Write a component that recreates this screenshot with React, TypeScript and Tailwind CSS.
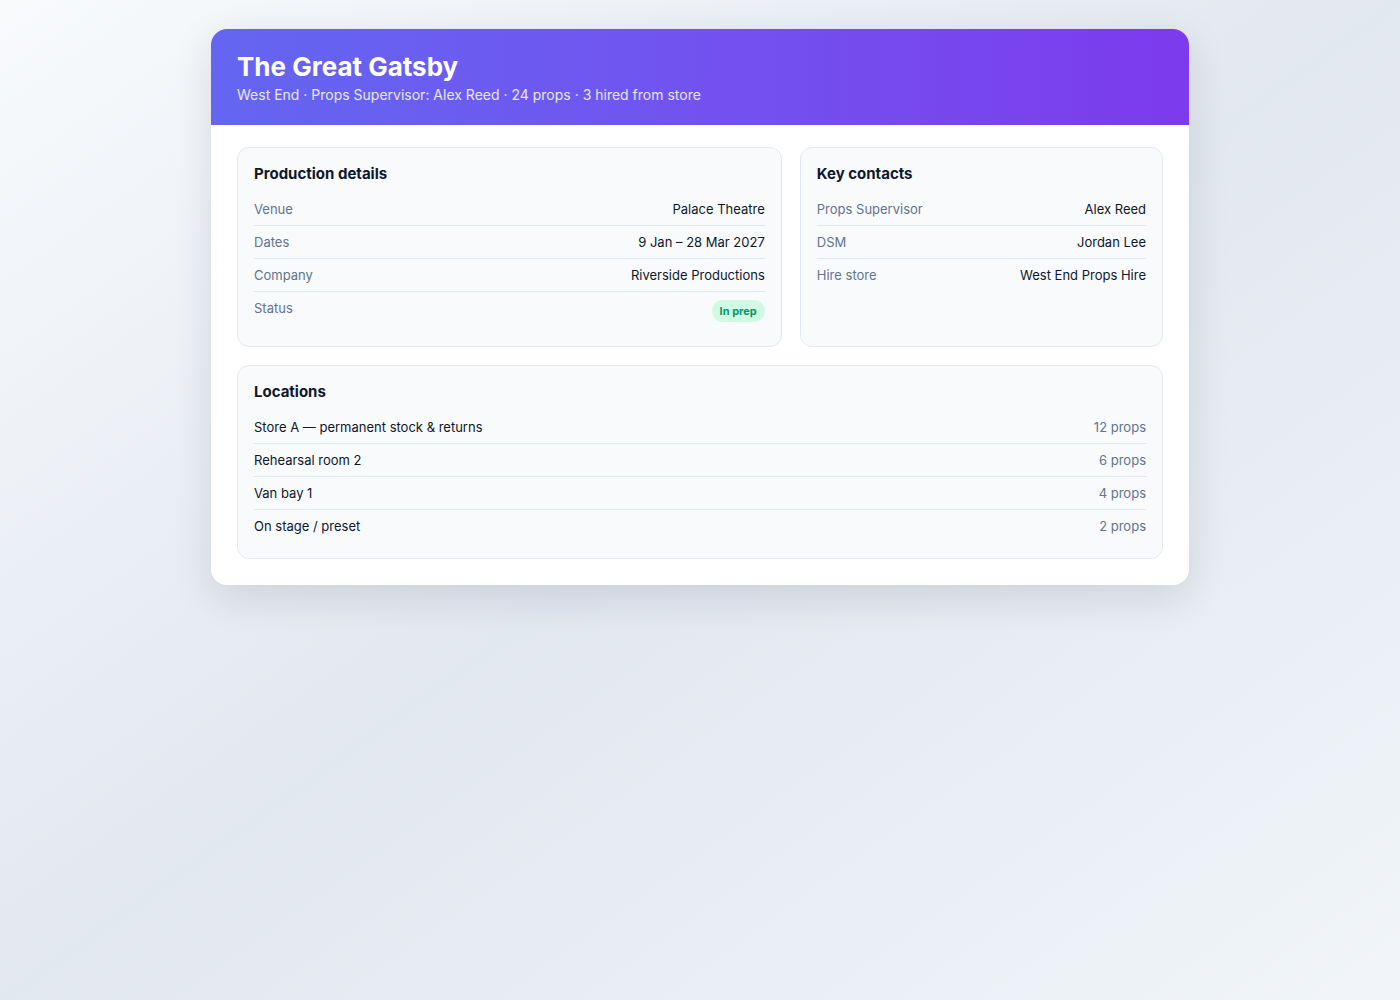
const details = [
  { label: "Venue", value: "Palace Theatre" },
  { label: "Dates", value: "9 Jan – 28 Mar 2027" },
  { label: "Company", value: "Riverside Productions" },
]

const contacts = [
  { label: "Props Supervisor", value: "Alex Reed" },
  { label: "DSM", value: "Jordan Lee" },
  { label: "Hire store", value: "West End Props Hire" },
]

const locations = [
  { name: "Store A — permanent stock & returns", count: 12 },
  { name: "Rehearsal room 2", count: 6 },
  { name: "Van bay 1", count: 4 },
  { name: "On stage / preset", count: 2 },
]

const Row = ({ children, last }: { children: React.ReactNode; last?: boolean }) => (
  <div
    className={`flex items-start justify-between py-1.5 text-[13px] leading-5 ${
      last ? "" : "border-b border-slate-200"
    }`}
  >
    {children}
  </div>
)

const Panel = ({ title, children }: { title: string; children: React.ReactNode }) => (
  <section className="rounded-xl border border-slate-200 bg-slate-50 p-4">
    <h2 className="mb-[9px] text-[15px] font-bold leading-5 text-slate-900">{title}</h2>
    <div>{children}</div>
  </section>
)

const App = () => {
  return (
    <div
      className="min-h-screen bg-gradient-to-br from-[#f8fafc] via-[#e2e8f0] to-[#f1f5f9] pt-[29px]"
      style={{ fontFamily: "Inter, 'Noto Sans', sans-serif" }}
    >
      <div className="mx-auto w-[978px] overflow-hidden rounded-2xl bg-white shadow-[0_12px_40px_rgba(15,23,42,0.12)]">
        <header className="h-24 bg-gradient-to-r from-[#6366f1] to-[#7c3aed] px-[26px] pt-[22px] text-white">
          <h1 className="text-[26px] font-bold leading-8">The Great Gatsby</h1>
          <p className="mt-0.5 text-[14px] leading-5 text-white/85">
            West End · Props Supervisor: Alex Reed · 24 props · 3 hired from store
          </p>
        </header>

        <div className="flex flex-col gap-[18px] px-[26px] pb-[26px] pt-[22px]">
          <div className="grid grid-cols-[1.5fr_1fr] gap-[18px]">
            <Panel title="Production details">
              {details.map((d) => (
                <Row key={d.label}>
                  <span className="text-slate-500">{d.label}</span>
                  <span className="text-slate-900">{d.value}</span>
                </Row>
              ))}
              <Row last>
                <span className="text-slate-500">Status</span>
                <span className="mb-0.5 mt-0.5 rounded-full bg-[#d1fae5] px-2 py-0.5 text-[11px] font-bold leading-[18px] text-[#059669]">
                  In prep
                </span>
              </Row>
            </Panel>

            <Panel title="Key contacts">
              {contacts.map((c, i) => (
                <Row key={c.label} last={i === contacts.length - 1}>
                  <span className="text-slate-500">{c.label}</span>
                  <span className="text-slate-900">{c.value}</span>
                </Row>
              ))}
            </Panel>
          </div>

          <Panel title="Locations">
            {locations.map((l, i) => (
              <Row key={l.name} last={i === locations.length - 1}>
                <span className="text-slate-900">{l.name}</span>
                <span className="text-slate-500">{l.count} props</span>
              </Row>
            ))}
          </Panel>
        </div>
      </div>
    </div>
  )
}

export default App
